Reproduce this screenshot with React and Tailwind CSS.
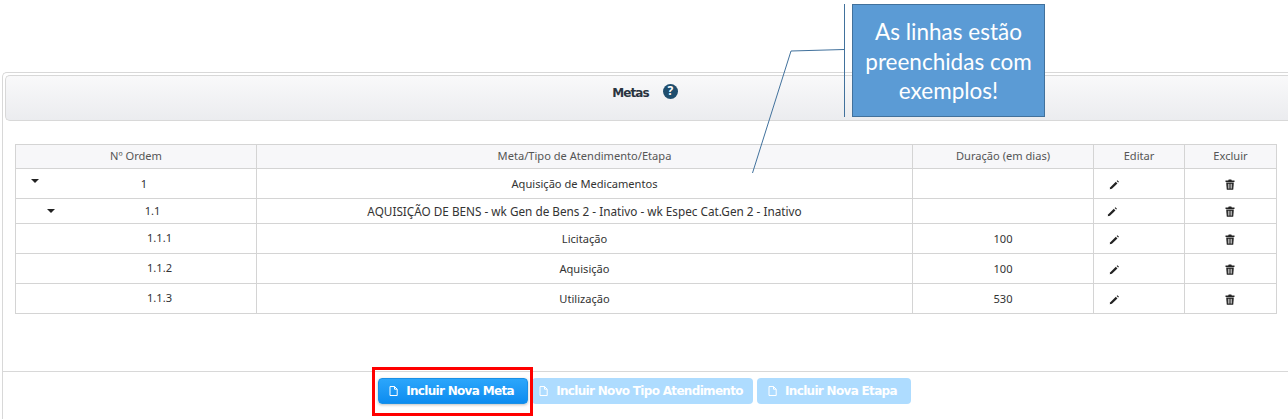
const rows = [
  { ordem: '1', meta: 'Aquisição de Medicamentos', dias: '', caret: 'ml-[15px]', h: 'h-[30px]', ordemCls: 'pl-[16px] pt-[1px]', editCls: 'pl-[15px]' },
  { ordem: '1.1', meta: 'AQUISIÇÃO DE BENS - wk Gen de Bens 2 - Inativo - wk Espec Cat.Gen 2 - Inativo', metaCls: 'text-[11.75px]', dias: '', caret: 'ml-[31px]', h: 'h-[25px]', ordemCls: 'pl-[33px]', editCls: 'pl-[13px]' },
  { ordem: '1.1.1', meta: 'Licitação', dias: '100', h: 'h-[30px]' },
  { ordem: '1.1.2', meta: 'Aquisição', dias: '100', h: 'h-[30px]' },
  { ordem: '1.1.3', meta: 'Utilização', dias: '530', h: 'h-[30px]' },
];

function Caret({ className }) {
  return <span className={`absolute top-[10px] left-0 w-0 h-0 border-x-[4px] border-x-transparent border-t-[4px] border-t-[#222] ${className}`} />;
}

function PencilIcon() {
  return (
    <svg width="11" height="11" viewBox="0 0 12 12" className="inline-block">
      <path d="M0.8 11.2 L1.4 8.9 L7.4 3 L9.2 4.8 L3.2 10.7 Z" fill="#222" />
      <path d="M8.3 2.2 L9.2 1.3 L10.9 3 L10 3.9 Z" fill="#222" />
    </svg>
  );
}

function TrashIcon() {
  return (
    <svg width="10" height="11" viewBox="0 0 10 11" className="inline-block">
      <path d="M0.5 1.6 H3.2 L3.7 0.6 H6.3 L6.8 1.6 H9.5 V3 H0.5 Z" fill="#222" />
      <path d="M1.2 3.6 H8.8 L8.3 10.2 Q8.2 10.8 7.6 10.8 H2.4 Q1.8 10.8 1.7 10.2 Z" fill="#222" />
      <path d="M3.4 4.8 V9.6 M5 4.8 V9.6 M6.6 4.8 V9.6" stroke="#fff" strokeWidth="0.7" />
    </svg>
  );
}

function FileIcon() {
  return (
    <svg width="9" height="10" viewBox="0 0 9 10">
      <path d="M1 0.5 H5.5 L8.2 3.2 V9.5 H1 Z M5.5 0.5 V3.2 H8.2" fill="none" stroke="#fff" strokeWidth="1" />
    </svg>
  );
}

function FooterButton({ label, active, width }) {
  return (
    <button
      className={`flex items-center justify-center gap-[8px] h-[26px] pr-[3px] rounded-[4px] text-white text-[12px] font-bold [font-family:'DejaVu_Sans',sans-serif] tracking-[-0.68px] ${width} ${active ? 'bg-gradient-to-b from-[#2ba6fb] to-[#0b8cf0] border border-[#1a90e6] shadow-[0_1px_3px_rgba(0,0,0,0.25)]' : 'bg-[#aedcff]'}`}
    >
      <FileIcon />
      {label}
    </button>
  );
}

export default function App() {
  return (
    <div className="relative w-[1288px] h-[419px] bg-white overflow-hidden pt-[72px] pl-[2px] [font-family:'Noto_Sans',sans-serif]">
      <div className="h-[347px] border-t border-l border-[#d8d8d8] rounded-tl-[5px] pl-[2px] pt-[2px] flex flex-col">
        <div className="h-[46px] border border-r-0 border-[#d8d8d8] rounded-l-[5px] bg-gradient-to-b from-[#f9f9fa] to-[#ebecef] flex items-center justify-center gap-[14px] pb-[11px] pr-[4px]">
          <span className="text-[12px] font-bold text-[#2a3440] leading-none [font-family:'DejaVu_Sans',sans-serif] tracking-[-0.9px]">Metas</span>
          <span className="w-[15px] h-[15px] -mt-[3px] rounded-full bg-[#1f4e6e] text-white text-[12px] font-bold flex items-center justify-center leading-none">?</span>
        </div>

        <table className="ml-[10px] mt-[23px] w-[1262px] table-fixed border-collapse text-[11.1px] text-[#333]">
          <colgroup>
            <col className="w-[241px]" />
            <col className="w-[656px]" />
            <col className="w-[181px]" />
            <col className="w-[91px]" />
            <col className="w-[92px]" />
          </colgroup>
          <thead>
            <tr className="h-[24px] bg-[#f7f7f9] text-[#555] font-normal">
              <th className="border border-[#d4d4d4] font-normal">Nº Ordem</th>
              <th className="border border-[#d4d4d4] font-normal">Meta/Tipo de Atendimento/Etapa</th>
              <th className="border border-[#d4d4d4] font-normal">Duração (em dias)</th>
              <th className="border border-[#d4d4d4] font-normal">Editar</th>
              <th className="border border-[#d4d4d4] font-normal">Excluir</th>
            </tr>
          </thead>
          <tbody>
            {rows.map((r) => (
              <tr key={r.ordem} className={r.h}>
                <td className={`relative border border-[#d4d4d4] text-center ${r.ordemCls ?? 'pl-[47px]'}`}>
                  {r.caret && <Caret className={r.caret} />}
                  {r.ordem}
                </td>
                <td className={`border border-[#d4d4d4] text-center pt-[1px] ${r.metaCls ?? ''}`}>{r.meta}</td>
                <td className="border border-[#d4d4d4] text-center pt-[1px]">{r.dias}</td>
                <td className={`border border-[#d4d4d4] text-left ${r.editCls ?? 'pl-[15px]'}`}><PencilIcon /></td>
                <td className="border border-[#d4d4d4] text-center pr-[2px]"><TrashIcon /></td>
              </tr>
            ))}
          </tbody>
        </table>

        <div className="mt-[57px] -ml-[2px] border-t border-[#d8d8d8] flex justify-center gap-[4px] pt-[6px] pr-[2px]">
          <FooterButton label="Incluir Nova Meta" active width="w-[150px]" />
          <FooterButton label="Incluir Novo Tipo Atendimento" width="w-[221px]" />
          <FooterButton label="Incluir Nova Etapa" width="w-[154px]" />
        </div>
      </div>

      {/* destaque em volta do primeiro botão */}
      <div className="absolute left-[372px] top-[367px] w-[161px] h-[49px] border-[3px] border-[#ff0000]" />

      {/* texto explicativo */}
      <div className="absolute left-[852px] top-[4px] w-[193px] h-[113px] bg-[#5b9bd5] border border-[#41719c] text-white text-[22.5px] leading-[29.5px] text-center pt-[12px] [font-family:'Lato',sans-serif]">
        As linhas estão preenchidas com exemplos!
      </div>
      <svg className="absolute left-[745px] top-0" width="110" height="180" viewBox="0 0 110 180">
        <path d="M99.5 4 V117" stroke="#41719c" strokeWidth="1" fill="none" />
        <path d="M99 49.5 L46 51 L7.5 173" stroke="#41719c" strokeWidth="1" fill="none" />
      </svg>
    </div>
  );
}
